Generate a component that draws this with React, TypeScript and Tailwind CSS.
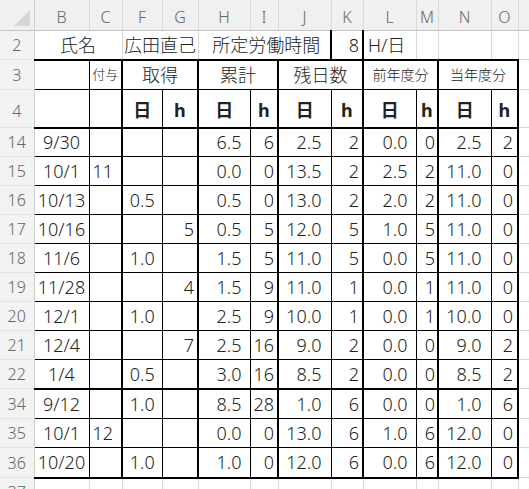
import React from "react";

const colW = [34, 55, 33, 40, 36, 52, 28, 53, 32, 53, 22, 53, 27, 60];
const letters = ["", "B", "C", "F", "G", "H", "I", "J", "K", "L", "M", "N", "O", ""];

// left borders inside the boxed table (rows 3..36)
const boxL: Record<number, string> = {
  1: "border-l border-l-[#d4d4d4]",
  2: "border-l border-l-black",
  3: "border-l-2 border-l-black",
  4: "border-l border-l-black",
  5: "border-l-2 border-l-black",
  6: "border-l border-l-black",
  7: "border-l-2 border-l-black",
  8: "border-l border-l-black",
  9: "border-l-2 border-l-black",
  10: "border-l border-l-black",
  11: "border-l-2 border-l-black",
  12: "border-l border-l-black",
  13: "border-l-2 border-l-black",
};

const align: Record<number, string> = {
  1: "text-center",
  2: "text-left pl-[3px]",
  3: "text-center",
  4: "text-right pr-[3px]",
  5: "text-right pr-[8px]",
  6: "text-right pr-[3px]",
  7: "text-right pr-[9px]",
  8: "text-right pr-[3px]",
  9: "text-right pr-[8px]",
  10: "text-right pr-[2px]",
  11: "text-right pr-[9px]",
  12: "text-right pr-[4px]",
};

type Row = { n: number; h: string; top: "thin" | "thick"; cells: string[] };

const rows: Row[] = [
  { n: 14, h: "h-[29px]", top: "thick", cells: ["9/30", "", "", "", "6.5", "6", "2.5", "2", "0.0", "0", "2.5", "2"] },
  { n: 15, h: "h-[29px]", top: "thin", cells: ["10/1", "11", "", "", "0.0", "0", "13.5", "2", "2.5", "2", "11.0", "0"] },
  { n: 16, h: "h-[29px]", top: "thin", cells: ["10/13", "", "0.5", "", "0.5", "0", "13.0", "2", "2.0", "2", "11.0", "0"] },
  { n: 17, h: "h-[29px]", top: "thin", cells: ["10/16", "", "", "5", "0.5", "5", "12.0", "5", "1.0", "5", "11.0", "0"] },
  { n: 18, h: "h-[29px]", top: "thin", cells: ["11/6", "", "1.0", "", "1.5", "5", "11.0", "5", "0.0", "5", "11.0", "0"] },
  { n: 19, h: "h-[29px]", top: "thin", cells: ["11/28", "", "", "4", "1.5", "9", "11.0", "1", "0.0", "1", "11.0", "0"] },
  { n: 20, h: "h-[29px]", top: "thin", cells: ["12/1", "", "1.0", "", "2.5", "9", "10.0", "1", "0.0", "1", "10.0", "0"] },
  { n: 21, h: "h-[29px]", top: "thin", cells: ["12/4", "", "", "7", "2.5", "16", "9.0", "2", "0.0", "0", "9.0", "2"] },
  { n: 22, h: "h-[29px]", top: "thin", cells: ["1/4", "", "0.5", "", "3.0", "16", "8.5", "2", "0.0", "0", "8.5", "2"] },
  { n: 34, h: "h-[30px]", top: "thick", cells: ["9/12", "", "1.0", "", "8.5", "28", "1.0", "6", "0.0", "0", "1.0", "6"] },
  { n: 35, h: "h-[29px]", top: "thin", cells: ["10/1", "12", "", "", "0.0", "0", "13.0", "6", "1.0", "6", "12.0", "0"] },
  { n: 36, h: "h-[30px]", top: "thin", cells: ["10/20", "", "1.0", "", "1.0", "0", "12.0", "6", "0.0", "6", "12.0", "0"] },
];

const rowHead =
  "bg-[#f3f3f3] border-r border-r-[#cfcfcf] border-t border-t-[#e2e2e2] text-center text-[16px] text-[#666] font-['Noto_Sans',sans-serif] font-light";

function Corner() {
  return (
    <svg width="34" height="30" viewBox="0 0 34 30" className="block">
      <polygon points="30,10 30,26 14,26" fill="#d6d6d6" />
    </svg>
  );
}

export default function App() {
  const topThin = "border-t border-t-black";
  const topThick = "border-t-2 border-t-black";
  const gridTop = "border-t border-t-[#d9d9d9]";
  const gridL = "border-l border-l-[#d9d9d9]";

  return (
    <div className="w-[529px] h-[489px] overflow-hidden bg-white">
      <table className="table-fixed w-[578px] border-collapse text-[18px] text-[#222] font-light font-['Noto_Sans','Noto_Sans_CJK_JP',sans-serif] leading-none">
        <colgroup>
          {colW.map((w, i) => (
            <col key={i} style={{ width: w }} />
          ))}
        </colgroup>
        <tbody>
          {/* column letters */}
          <tr className="h-[30px] bg-[#f0f0f0]">
            <td className="p-0 border-r border-r-[#cfcfcf] border-b border-b-[#c4c4c4]">
              <Corner />
            </td>
            {letters.slice(1).map((l, i) => (
              <td
                key={i}
                className={`border-b border-b-[#c4c4c4] ${i > 0 ? "border-l border-l-[#dadada]" : ""} text-center pt-[3px] text-[16px] text-[#666] font-['Noto_Sans',sans-serif] font-light`}
              >
                {l}
              </td>
            ))}
          </tr>

          {/* row 2 */}
          <tr className="h-[29px]">
            <td className={rowHead}>2</td>
            <td colSpan={2} className={`${gridL} text-center`}>
              氏名
            </td>
            <td colSpan={2} className={`${gridL} text-center`}>
              広田直己
            </td>
            <td colSpan={3} className={`${gridL} text-center pl-[4px]`}>
              所定労働時間
            </td>
            <td className="border-l-2 border-l-black text-right pr-[3px]">8</td>
            <td className="border-l-2 border-l-black text-left pl-[4px]">H/日</td>
            <td className={gridL}></td>
            <td className={gridL}></td>
            <td className={gridL}></td>
            <td className={gridL}></td>
          </tr>

          {/* row 3 */}
          <tr className="h-[30px]">
            <td className={rowHead}>3</td>
            <td className={`${boxL[1]} ${topThick}`}></td>
            <td className={`${boxL[2]} ${topThick} text-center text-[13px]`}>付与</td>
            <td colSpan={2} className={`${boxL[3]} ${topThick} text-center`}>
              取得
            </td>
            <td colSpan={2} className={`${boxL[5]} ${topThick} text-center`}>
              累計
            </td>
            <td colSpan={2} className={`${boxL[7]} ${topThick} text-center`}>
              残日数
            </td>
            <td colSpan={2} className={`${boxL[9]} ${topThick} text-center text-[14px]`}>
              前年度分
            </td>
            <td colSpan={2} className={`${boxL[11]} ${topThick} text-center text-[14px]`}>
              当年度分
            </td>
            <td className={`${boxL[13]} ${gridTop}`}></td>
          </tr>

          {/* row 4 */}
          <tr className="h-[38px]">
            <td className={`${rowHead} pt-[4px]`}>4</td>
            <td className={`${boxL[1]} ${topThin}`}></td>
            <td className={`${boxL[2]} ${topThin}`}></td>
            {["日", "h", "日", "h", "日", "h", "日", "h", "日", "h"].map((t, i) => (
              <td key={i} className={`${boxL[i + 3]} ${topThin} text-center font-bold pt-[4px]`}>
                {t}
              </td>
            ))}
            <td className={`${boxL[13]} ${gridTop}`}></td>
          </tr>

          {rows.map((r) => (
            <tr key={r.n} className={r.h}>
              <td className={rowHead}>{r.n}</td>
              {r.cells.map((c, i) => (
                <td
                  key={i}
                  className={`${boxL[i + 1]} ${r.top === "thick" ? topThick : topThin} ${align[i + 1]} whitespace-nowrap`}
                >
                  {c}
                </td>
              ))}
              <td className={`${boxL[13]} ${gridTop}`}></td>
            </tr>
          ))}

          {/* row 37 */}
          <tr className="h-[30px]">
            <td className={`${rowHead} align-top pt-[6px]`}>37</td>
            {colW.slice(1, 13).map((_, i) => (
              <td key={i} className={`${gridL} ${topThick}`}></td>
            ))}
            <td className={`${gridL} ${gridTop}`}></td>
          </tr>
        </tbody>
      </table>
    </div>
  );
}
